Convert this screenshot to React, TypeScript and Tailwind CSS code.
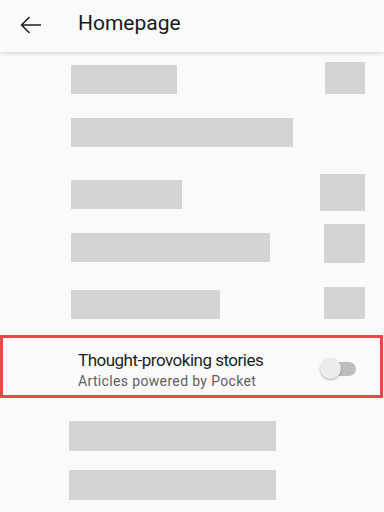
import React from "react";

const Bar = ({ w, h = 29, cls = "" }: { w: number; h?: number; cls?: string }) => (
  <div className={`bg-[#d4d4d4] ${cls}`} style={{ width: w, height: h }} />
);

export default function App() {
  return (
    <div
      className="w-[384px] h-[512px] overflow-hidden bg-[#fafafa] relative"
      style={{ fontFamily: "Roboto, 'Liberation Sans', sans-serif" }}
    >
      {/* Header */}
      <div className="relative z-10 h-[52px] bg-[#fafafa] shadow-[0_2px_4px_rgba(0,0,0,0.12)] flex items-center pb-[6px]">
        <div className="ml-[20px] w-[21px] h-[18px] flex items-center mt-[4px]">
          <svg width="21" height="18" viewBox="0 0 21 18" fill="none">
            <path d="M20.5 9 H1.5 M1.5 9 L9 1.5 M1.5 9 L9 16.5" stroke="#212121" strokeWidth="1.6" strokeLinecap="round" strokeLinejoin="round" />
          </svg>
        </div>
        <div className="ml-[37px] text-[21px] leading-[24px] font-normal text-[#1a1a1a]">Homepage</div>
      </div>

      {/* Row 1 */}
      <div className="mt-[10px] flex items-end justify-between pl-[71px] pr-[19px] h-[32px]">
        <Bar w={106} />
        <Bar w={40} h={32} />
      </div>

      {/* Row 2 */}
      <div className="mt-[24px] pl-[71px]">
        <Bar w={222} />
      </div>

      {/* Row 3 */}
      <div className="mt-[27px] flex items-start justify-between pl-[71px] pr-[19px]">
        <Bar w={111} cls="mt-[6px]" />
        <Bar w={45} h={37} />
      </div>

      {/* Row 4 */}
      <div className="mt-[13px] flex items-start justify-between pl-[71px] pr-[19px]">
        <Bar w={199} cls="mt-[9px]" />
        <Bar w={41} h={39} />
      </div>

      {/* Row 5 */}
      <div className="mt-[24px] flex items-end justify-between pl-[71px] pr-[19px]">
        <Bar w={149} />
        <Bar w={41} h={32} />
      </div>

      {/* Highlighted row */}
      <div className="mt-[16px] w-[383px] h-[63px] border-[3px] border-[#f04646] flex items-start justify-between pl-[75px] pr-[24px]">
        <div className="pt-[12px]">
          <div className="text-[17px] leading-[21px] tracking-[-0.5px] text-[#1f1f1f]">Thought-provoking stories</div>
          <div className="mt-[1px] text-[14px] leading-[18px] tracking-[0.35px] text-[#5f5f5f]">Articles powered by Pocket</div>
        </div>
        <div className="relative w-[36px] h-[21px] mt-[20px]">
          <div className="absolute right-0 top-[4px] w-[32px] h-[14px] rounded-full bg-[#bdbdbd]" />
          <div className="absolute left-0 top-0 w-[21px] h-[21px] rounded-full bg-[#ececec] shadow-[0_1px_2px_rgba(0,0,0,0.3)]" />
        </div>
      </div>

      {/* Bars below */}
      <div className="mt-[23px] pl-[69px]">
        <Bar w={207} h={30} />
      </div>
      <div className="mt-[19px] pl-[69px]">
        <Bar w={207} h={30} />
      </div>
    </div>
  );
}
